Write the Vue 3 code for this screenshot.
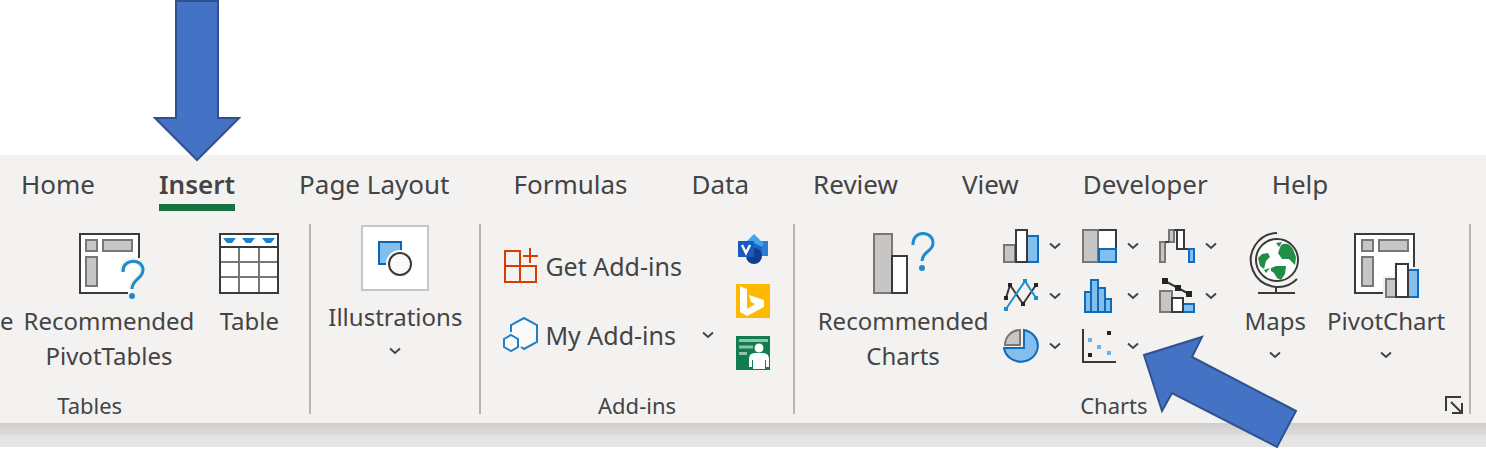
<script setup>
const tabs = ['Home', 'Insert', 'Page Layout', 'Formulas', 'Data', 'Review', 'View', 'Developer', 'Help']
const active = 'Insert'
const charts = ['column', 'treemap', 'waterfall', 'line', 'histogram', 'combo', 'pie', 'scatter']
</script>

<template>
  <div class="page">
    <div class="ribbon">
      <nav class="tabs" aria-label="Ribbon tabs">
        <button v-for="t in tabs" :key="t" type="button" class="tab" :class="{ active: t === active }">{{ t }}</button>
      </nav>

      <div class="groups">
        <section class="group tables">
          <div class="tools">
            <button type="button" class="big cut"><span>e</span></button>
            <button type="button" class="big">
              <svg class="icon" width="74" height="68" viewBox="-6 0 74 68" fill="none">
                <path d="M61 26V2H2V61H50" fill="#fff" stroke="#3b3a39" stroke-width="2" />
                <path d="M50 61L61 50V26H50Z" fill="#fff" />
                <path d="M50 61H2" stroke="#3b3a39" stroke-width="2" />
                <g fill="#c8c6c4" stroke="#797775" stroke-width="2">
                  <rect x="8" y="8" width="11" height="11" /><rect x="25" y="8" width="29" height="11" /><rect x="8" y="25" width="11" height="29" />
                </g>
                <path d="M45 40C44 25 65 25 65 38C65 47 54 47 54 57" stroke="#f3f2f1" stroke-width="7" />
                <path d="M45 40C44 26 65 26 65 38C65 47 54 47 54 57" stroke="#1e8bcd" stroke-width="3" />
                <circle cx="54" cy="64" r="3" fill="#1e8bcd" />
              </svg>
              <span>Recommended<br>PivotTables</span>
            </button>
            <button type="button" class="big">
              <svg class="icon" width="62" height="68" viewBox="0 0 62 68" fill="none">
                <rect x="2" y="2" width="58" height="59" fill="#fff" />
                <path d="M21 15V61M41 15V61M2 30H60M2 45H60" stroke="#797775" stroke-width="2" />
                <path d="M2 15H60M2 2H60V61H2Z" stroke="#3b3a39" stroke-width="2" />
                <path d="M5 6H18L14 11H9ZM24 6H37L33 11H28ZM44 6H57L53 11H48Z" fill="#1e7fcb" />
              </svg>
              <span>Table</span>
            </button>
          </div>
          <div class="caption"><span>Tables</span></div>
        </section>

        <section class="group illustrations">
          <div class="tools">
            <button type="button" class="big">
              <span class="tile">
                <svg width="36" height="36" viewBox="0 0 36 36" fill="none">
                  <rect x="2" y="2" width="22" height="22" fill="#83beec" stroke="#0f64b0" stroke-width="2" />
                  <circle cx="23" cy="24" r="14" fill="#fff" />
                  <circle cx="23" cy="24" r="11" fill="#fafafa" stroke="#3b3a39" stroke-width="2" />
                </svg>
              </span>
              <span>Illustrations</span>
              <svg class="chevron" width="14" height="8" viewBox="0 0 14 8"><path d="M2 1.5L7 6L12 1.5" /></svg>
            </button>
          </div>
          <div class="caption"></div>
        </section>

        <section class="group addins">
          <div class="tools">
            <div class="stack">
              <button type="button" class="row">
                <svg width="36" height="36" viewBox="0 0 36 36" fill="none" stroke="#d83b01" stroke-width="2">
                  <path d="M2 3H17V34H2ZM2 18H33V34H17" /><path d="M27 0V15M20 8H35" />
                </svg>
                <span>Get Add-ins</span>
              </button>
              <button type="button" class="row">
                <svg width="36" height="36" viewBox="0 0 36 36" fill="none" stroke="#1e7fcb" stroke-width="2">
                  <path d="M8 15V8L21 1L34 8V25L21 32L18 30" fill="#fafafa" />
                  <path d="M8 18L15 22V30L8 34L1 30V22Z" fill="#fafafa" />
                </svg>
                <span>My Add-ins</span>
                <svg class="chevron" width="14" height="8" viewBox="0 0 14 8"><path d="M2 1.5L7 6L12 1.5" /></svg>
              </button>
            </div>
            <div class="apps">
              <button type="button" aria-label="Visio Data Visualizer">
                <svg width="36" height="36" viewBox="0 0 36 36">
                  <rect x="20" y="10" width="13" height="15" fill="#2b7cd3" />
                  <path d="M19 3L29 13L19 23L9 13Z" fill="#41a5ee" />
                  <path d="M19 12L27 16V23L19 27Z" fill="#1868c0" />
                  <circle cx="19" cy="25" r="8" fill="#103f91" />
                  <rect x="3" y="10" width="16" height="16" fill="#185abd" />
                  <path d="M7 14L11 22L15 14" fill="none" stroke="#fff" stroke-width="2.5" />
                </svg>
              </button>
              <button type="button" aria-label="Bing Maps">
                <svg width="36" height="36" viewBox="0 0 36 36">
                  <rect x="1" y="1" width="34" height="34" fill="#ffb900" />
                  <path d="M5 3L12 6V26L20 21L16 19L14 12L29 17V24L12 33L5 29Z" fill="#fff" />
                </svg>
              </button>
              <button type="button" aria-label="People Graph">
                <svg width="36" height="36" viewBox="0 0 36 36">
                  <rect x="1" y="1" width="34" height="34" fill="#107c50" />
                  <path d="M4 5.500H33M4 12H18M4 18.500H12" stroke="#8cc5a8" stroke-width="3" />
                  <circle cx="24" cy="13" r="5" fill="#fff" stroke="#107c50" />
                  <path d="M14 32V24Q14 18 20 18H28Q34 18 34 24V32H31V25H30V34H18V25H17V32Z" fill="#fff" />
                </svg>
              </button>
            </div>
          </div>
          <div class="caption"><span>Add-ins</span></div>
        </section>

        <section class="group charts">
          <div class="tools">
            <button type="button" class="big">
              <svg class="icon" width="68" height="68" viewBox="0 0 68 68" fill="none">
                <rect x="5" y="2" width="18" height="59" fill="#c8c6c4" stroke="#797775" stroke-width="2" />
                <rect x="23" y="24" width="15" height="37" fill="#fff" stroke="#3b3a39" stroke-width="2" />
                <path d="M44 13C43 -2 64 -2 64 11C64 20 53 19 53 29" stroke="#1e8bcd" stroke-width="3" />
                <circle cx="53" cy="36" r="3" fill="#1e8bcd" />
              </svg>
              <span>Recommended<br>Charts</span>
            </button>

            <div class="gallery">
              <button v-for="c in charts" :key="c" type="button" class="mini" :aria-label="c + ' chart'">
                <svg width="36" height="36" viewBox="0 0 36 36" fill="none" stroke-width="2">
                  <template v-if="c === 'column'">
                    <path d="M1 17H12V34H1Z" class="grey" /><path d="M24 8H35V34H24Z" class="blue" /><path d="M13 2H24V34H13Z" class="white" />
                  </template>
                  <template v-else-if="c === 'treemap'">
                    <path d="M17 2H35V21H17Z" class="white" /><path d="M2 2H17V34H2Z" class="grey" /><path d="M18 21H35V34H18Z" class="blue" />
                  </template>
                  <template v-else-if="c === 'waterfall'">
                    <path d="M1 14H6V34H1ZM10 2H15V14H10Z" class="grey" /><path d="M6 14H10M15 2H18M25 21H30" stroke="#3b3a39" />
                    <path d="M18 2H25V21H18Z" class="white" /><path d="M30 21H35V34H30Z" class="blue" />
                  </template>
                  <template v-else-if="c === 'line'">
                    <path d="M3 20L7 7L20 26L33 7" stroke="#3b3a39" /><path d="M3 31L22 3L33 20" stroke="#1e8bcd" />
                    <path d="M1 18H5V22H1ZM5 5H9V9H5ZM18 24H22V28H18ZM31 5H35V9H31Z" fill="#252423" />
                    <path d="M1 29H5V33H1ZM20 1H24V5H20ZM31 18H35V22H31Z" fill="#1e8bcd" />
                  </template>
                  <template v-else-if="c === 'histogram'">
                    <path d="M4 14H10V34H4ZM10 2H17V34H10ZM17 10H24V34H17ZM24 21H30V34H24Z" class="blue" />
                  </template>
                  <template v-else-if="c === 'combo'">
                    <path d="M1 13H13V34H1Z" class="grey" /><path d="M24 26H35V34H24Z" class="blue" /><path d="M13 20H24V34H13Z" class="white" />
                    <path d="M6 3L19 10L30 16" stroke="#3b3a39" /><path d="M3 0H9V6H3ZM16 7H22V13H16ZM27 13H33V19H27Z" fill="#252423" />
                  </template>
                  <template v-else-if="c === 'pie'">
                    <path d="M17 2V17H2A15 15 0 0 1 17 2Z" class="grey" /><path d="M21 2V20H1A17 16 0 1 0 21 2Z" class="blue" />
                  </template>
                  <template v-else>
                    <path d="M2 1V34H35" stroke="#3b3a39" /><path d="M26 3H30V7H26ZM7 25H11V29H7Z" fill="#252423" />
                    <path d="M7 10H11V14H7ZM16 17H20V21H16ZM26 23H30V27H26Z" fill="#6cb3ea" />
                  </template>
                </svg>
                <svg class="chevron" width="14" height="8" viewBox="0 0 14 8"><path d="M2 1.5L7 6L12 1.5" /></svg>
              </button>
            </div>

            <button type="button" class="big maps">
              <svg class="icon" width="52" height="68" viewBox="0 0 52 68" fill="none">
                <circle cx="28" cy="28" r="21" fill="#fff" stroke="#3b3a39" stroke-width="2" />
                <path d="M32 13Q39 9 44 17L47 25L46 33L40 27H33L29 21ZM27 11L33 10L30 15ZM9 26L13 22L19 21L21 25L17 29L15 37L11 34ZM22 36L27 34H37L36 42L32 48L28 46L25 41L22 39ZM15 38L21 36L17 41Z" fill="#218d46" />
                <path d="M28 1A27 27 0 1 0 48 47" stroke="#3b3a39" stroke-width="2" />
                <path d="M27 55V61M9 61H46" stroke="#3b3a39" stroke-width="2" />
              </svg>
              <span>Maps</span>
              <svg class="chevron" width="14" height="8" viewBox="0 0 14 8"><path d="M2 1.5L7 6L12 1.5" /></svg>
            </button>
            <button type="button" class="big">
              <svg class="icon" width="68" height="68" viewBox="0 0 68 68" fill="none">
                <path d="M62 2V61H3V2Z" fill="#fff" />
                <path d="M62 35V2H3V61H31" stroke="#3b3a39" stroke-width="2" />
                <g fill="#c8c6c4" stroke="#797775" stroke-width="2">
                  <rect x="10" y="8" width="11" height="11" /><rect x="27" y="8" width="29" height="11" /><rect x="10" y="25" width="11" height="29" />
                </g>
                <path d="M31 44H42V30H57V36H68V67H31Z" fill="#f3f2f1" />
                <g stroke-width="2"><path d="M34 47H44V65H34Z" class="grey" /><path d="M56 38H66V65H56Z" class="blue" /><path d="M44 32H56V65H44Z" class="white" /></g>
              </svg>
              <span>PivotChart</span>
              <svg class="chevron" width="14" height="8" viewBox="0 0 14 8"><path d="M2 1.5L7 6L12 1.5" /></svg>
            </button>
          </div>
          <div class="caption">
            <span>Charts</span>
            <button type="button" class="launcher" aria-label="Chart options">
              <svg width="18" height="18" viewBox="0 0 18 18" fill="none" stroke="#3b3a39" stroke-width="2"><path d="M1 15V1H16M6 6L16 16M17 7V17H7" /></svg>
            </button>
          </div>
        </section>
      </div>
    </div>
    <div class="shade"></div>

    <svg class="arrow down" width="88" height="162" viewBox="0 0 88 162"><path d="M23 1H65V118H86L44 160L2 118H23Z" /></svg>
    <svg class="arrow left" width="156" height="114" viewBox="0 0 156 114"><path d="M2 20L60 2L50 22L154 76L135 112L30 58L20 76Z" /></svg>
  </div>
</template>

<style>
body { margin: 0; background: #fff; }
</style>

<style scoped>
.page { position: relative; padding-top: 155px; padding-bottom: 3px; overflow: hidden; font-family: "Noto Sans", "Open Sans", sans-serif; font-size: 24px; color: #444; }
button { display: flex; align-items: center; margin: 0; padding: 0; border: 0; background: none; font: inherit; color: inherit; }
svg { display: block; flex: none; }
.ribbon { background: #f3f2f1; padding-bottom: 9px; }
.tabs { display: flex; gap: 64px; padding-left: 21px; height: 69px; }
.tab { height: 56px; padding-top: 8px; box-sizing: border-box; border-bottom: 7px solid transparent; font-size: 26px; line-height: 40px; white-space: nowrap; }
.tab.active { border-color: #187141; font-weight: 600; }
.groups { display: flex; padding-right: 15px; }
.group { display: flex; flex-direction: column; min-width: 0; box-sizing: border-box; border-right: 2px solid #b5b4b3; }
.tables { flex: 311 1 0; }
.illustrations { flex: 169 1 0; }
.addins { flex: 313 1 0; }
.charts { flex: 678 1 0; }
.tools { display: flex; align-items: flex-start; height: 172px; }
.caption { display: flex; align-items: center; height: 18px; font-size: 22px; line-height: 18px; }
.caption span { flex: 1; text-align: center; }
.big { flex-direction: column; line-height: 35px; white-space: nowrap; }
.icon { margin: 8px 0 3px; }
.chevron { fill: none; stroke: #444; stroke-width: 2; }
.big .chevron { margin-top: 13px; }
.tables .tools { gap: 24px; }
.cut { padding-top: 79px; margin-right: -14px; }
.tables .caption { padding-right: 130px; }
.illustrations .tools { justify-content: center; }
.tile { display: flex; align-items: center; justify-content: center; box-sizing: border-box; width: 68px; height: 66px; margin: 1px 0 8px; border: 2px solid #c8c6c4; background: #fff; }
.addins .tools { padding-left: 22px; padding-right: 22px; justify-content: space-between; }
.stack { display: flex; flex-direction: column; gap: 33px; padding-top: 24px; }
.row { gap: 6px; font-size: 25px; line-height: 36px; white-space: nowrap; }
.row .chevron { margin-left: 19px; }
.apps { display: flex; flex-direction: column; gap: 16px; padding-top: 7px; }
.charts .tools { padding-left: 23px; }
.gallery { display: grid; grid-template-columns: repeat(3, 78px); grid-auto-rows: 36px; row-gap: 14px; padding: 4px 0 0 14px; }
.mini { gap: 9px; }
.maps { margin: 0 21px 0 8px; }
.launcher { margin-right: 6px; padding-left: 12px; }
.grey { fill: #c8c6c4; stroke: #797775; }
.white { fill: #fff; stroke: #3b3a39; }
.blue { fill: #83beec; stroke: #0f6cbd; }
.shade { height: 24px; background: linear-gradient(#cfcecd, #dddcdb 12px, #e5e5e5 13px); }
.arrow { position: absolute; fill: #4472c4; stroke: #2f528f; stroke-width: 2; }
.down { left: 153px; top: 0; }
.left { left: 1142px; top: 335px; }
</style>
